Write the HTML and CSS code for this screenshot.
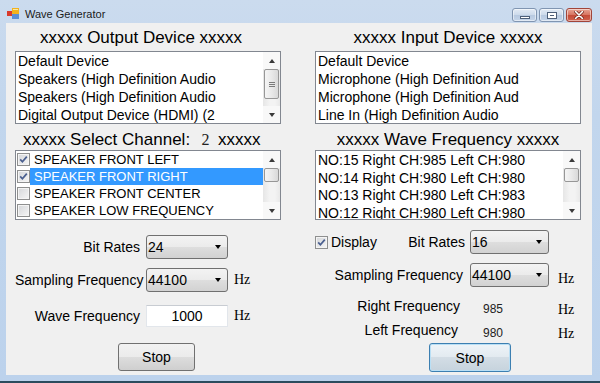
FILE: index.html
```html
<!DOCTYPE html>
<html lang="en">
<head>
  <meta charset="UTF-8">
  <title>Wave Generator</title>
  <link rel="stylesheet" href="styles.css">
</head>
<body>
<div class="ventana">

  <!-- BARRA DE TITULO -->
  <div class="barra-titulo">
    <svg class="icono-app" width="12" height="11" viewBox="0 0 12 11">
      <rect x="0" y="3" width="5" height="5" fill="#d93a2b"/>
      <rect x="5" y="0" width="7" height="6" fill="#f2b21e"/>
      <rect x="5" y="6" width="7" height="5" fill="#5b8fd6"/>
      <rect x="6" y="1" width="5" height="1" fill="#fbe7a6"/>
    </svg>
    <span class="titulo">Wave Generator</span>
    <div class="botones-ventana">
      <span class="btn-ventana minimizar"><i></i></span>
      <span class="btn-ventana maximizar"><i></i></span>
      <span class="btn-ventana cerrar">
        <svg width="10" height="8" viewBox="0 0 10 8">
          <path d="M1.5 0.5 L8.5 7.5 M8.5 0.5 L1.5 7.5" stroke="#6b2219" stroke-width="3" stroke-linecap="round"/>
          <path d="M1.5 0.5 L8.5 7.5 M8.5 0.5 L1.5 7.5" stroke="#fff" stroke-width="1.6" stroke-linecap="round"/>
        </svg>
      </span>
    </div>
  </div>

  <div class="cliente">

    <!-- SALIDA -->
    <div class="columna izquierda">
      <h2 class="encabezado encabezado-salida">xxxxx Output Device xxxxx</h2>
      <div class="lista lista-dispositivos">
        <ul class="items">
          <li>Default Device</li>
          <li>Speakers (High Definition Audio</li>
          <li>Speakers (High Definition Audio</li>
          <li>Digital Output Device (HDMI) (2</li>
        </ul>
        <div class="barra-scroll">
          <span class="flecha arriba"></span>
          <span class="pulgar pulgar-grande"><i></i><i></i><i></i></span>
          <span class="pista"></span>
          <span class="flecha abajo"></span>
        </div>
      </div>

      <div class="encabezado encabezado-canal">
        <span class="canal-texto">xxxxx Select Channel:</span>
        <span class="canal-numero">2</span>
        <span>xxxxx</span>
      </div>
      <div class="lista lista-canales">
        <ul class="items">
          <li>
            <span class="casilla"><svg viewBox="0 0 11 11"><path d="M2.2 5.4 L4.4 7.8 L8.8 2.6"/></svg></span>
            <span class="texto-item">SPEAKER FRONT LEFT</span>
          </li>
          <li class="seleccionado">
            <span class="casilla"><svg viewBox="0 0 11 11"><path d="M2.2 5.4 L4.4 7.8 L8.8 2.6"/></svg></span>
            <span class="texto-item">SPEAKER FRONT RIGHT</span>
          </li>
          <li><span class="casilla"></span><span class="texto-item">SPEAKER FRONT CENTER</span></li>
          <li><span class="casilla"></span><span class="texto-item">SPEAKER LOW FREQUENCY</span></li>
        </ul>
        <div class="barra-scroll">
          <span class="flecha arriba"></span>
          <span class="pulgar pulgar-chico"></span>
          <span class="pista"></span>
          <span class="flecha abajo"></span>
        </div>
      </div>

      <div class="fila fila-bits">
        <span class="etiqueta">Bit Rates</span>
        <div class="combo"><span class="combo-valor">24</span><span class="combo-flecha"></span></div>
      </div>
      <div class="fila fila-muestreo">
        <span class="etiqueta">Sampling Frequency</span>
        <div class="combo"><span class="combo-valor">44100</span><span class="combo-flecha"></span></div>
        <span class="unidad">Hz</span>
      </div>
      <div class="fila fila-onda">
        <span class="etiqueta">Wave Frequency</span>
        <div class="caja-texto">1000</div>
        <span class="unidad">Hz</span>
      </div>
      <button type="button" class="boton boton-salida">Stop</button>
    </div>

    <!-- ENTRADA -->
    <div class="columna derecha">
      <h2 class="encabezado">xxxxx Input Device xxxxx</h2>
      <div class="lista lista-dispositivos">
        <ul class="items">
          <li>Default Device</li>
          <li>Microphone (High Definition Aud</li>
          <li>Microphone (High Definition Aud</li>
          <li>Line In (High Definition Audio</li>
        </ul>
      </div>

      <h2 class="encabezado encabezado-onda">xxxxx Wave Frequency xxxxx</h2>
      <div class="lista lista-ondas">
        <ul class="items">
          <li>NO:15 Right CH:985 Left CH:980</li>
          <li>NO:14 Right CH:980 Left CH:980</li>
          <li>NO:13 Right CH:980 Left CH:983</li>
          <li>NO:12 Right CH:980 Left CH:980</li>
        </ul>
        <div class="barra-scroll">
          <span class="flecha arriba"></span>
          <span class="pulgar pulgar-chico"></span>
          <span class="pista"></span>
          <span class="flecha abajo"></span>
        </div>
      </div>

      <div class="fila fila-bits">
        <span class="etiqueta etiqueta-display">
          <span class="mostrar">
            <span class="casilla"><svg viewBox="0 0 11 11"><path d="M2.2 5.4 L4.4 7.8 L8.8 2.6"/></svg></span>Display
          </span>
          <span>Bit Rates</span>
        </span>
        <div class="combo"><span class="combo-valor">16</span><span class="combo-flecha"></span></div>
      </div>
      <div class="fila fila-muestreo">
        <span class="etiqueta pad-2">Sampling Frequency</span>
        <div class="combo"><span class="combo-valor">44100</span><span class="combo-flecha"></span></div>
        <span class="unidad unidad-baja">Hz</span>
      </div>
      <div class="fila fila-lectura">
        <span class="etiqueta pad-5">Right Frequency</span>
        <span class="valor">985</span>
        <span class="unidad unidad-baja">Hz</span>
      </div>
      <div class="fila fila-lectura fila-izq">
        <span class="etiqueta pad-7">Left Frequency</span>
        <span class="valor">980</span>
        <span class="unidad unidad-baja">Hz</span>
      </div>
      <button type="button" class="boton boton-entrada">Stop</button>
    </div>

  </div>
</div>
</body>
</html>
```

FILE: styles.css
```css
* {
  box-sizing: border-box;
}
body {
  margin: 0;
  font-family: "Liberation Sans", Arial, sans-serif;
  font-size: 14px;
  color: #000;
  background: #bcd2ec;
}
.ventana {
  width: 600px;
  height: 383px;
  display: flex;
  flex-direction: column;
  background: linear-gradient(#cbdbee, #c2d6ed 30%, #bcd2ec);
  border-bottom: 2px solid #2c4b5d;
}

/* barra de titulo */
.barra-titulo {
  height: 23px;
  display: flex;
  align-items: flex-start;
  padding: 8px 8px 0 7px;
}
.icono-app {
  display: block;
}
.titulo {
  margin-left: 6px;
  font-size: 11px;
  line-height: 13px;
  color: #1b1b1b;
}
.botones-ventana {
  margin-left: auto;
  display: flex;
  gap: 2px;
}
.btn-ventana {
  width: 25px;
  height: 14px;
  border: 1px solid #8095b1;
  border-radius: 3px;
  display: flex;
  align-items: center;
  justify-content: center;
  background: linear-gradient(#e3ebf5, #ccdaeb 50%, #b7c9e0 50%, #c5d5e9);
  box-shadow: inset 0 0 0 1px rgba(255,255,255,0.5);
}
.btn-ventana.cerrar {
  width: 26px;
  border-color: #a14539;
  background: linear-gradient(#e8a595, #d77360 50%, #c44a37 50%, #d1624e);
}
.minimizar i {
  width: 10px;
  height: 3px;
  margin-top: 4px;
  background: #fff;
  border: 1px solid #4d5f79;
}
.maximizar i {
  width: 10px;
  height: 7px;
  border: 1px solid #4d5f79;
  background: #fff;
  box-shadow: inset 0 0 0 2px #fff, inset 0 0 0 3px #4d5f79;
}

/* area cliente */
.cliente {
  flex: 1;
  margin: 0 8px 6px 6px;
  padding: 5px 11px 0 9px;
  background: #f0f0f0;
  display: flex;
  gap: 34px;
}
.columna {
  width: 266px;
  display: flex;
  flex-direction: column;
}
.encabezado {
  margin: 0;
  height: 20px;
  font-size: 17px;
  font-weight: normal;
  line-height: 20px;
  text-align: center;
  white-space: nowrap;
}
.encabezado-salida {
  padding-right: 14px;
}
.encabezado-canal,
.encabezado-onda {
  margin-top: 6px;
}
.encabezado-canal {
  display: flex;
  align-items: baseline;
  padding-left: 5px;
}
.canal-texto {
  width: 173px;
}
.canal-numero {
  width: 25px;
  font-family: "Liberation Serif", "Times New Roman", serif;
  font-size: 16px;
  color: #222;
}

/* listas */
.lista {
  background: #fff;
  border: 1px solid #828790;
  display: flex;
  overflow: hidden;
}
.lista-dispositivos {
  height: 73px;
  margin-top: 3px;
}
.lista-canales,
.lista-ondas {
  height: 70px;
}
.items {
  flex: 1;
  list-style: none;
  margin: 0;
  padding: 0 0 0 2px;
  white-space: nowrap;
  overflow: hidden;
}
.lista-dispositivos li {
  line-height: 18px;
}
.lista-ondas .items {
  padding-top: 1px;
}
.lista-ondas li {
  line-height: 17.5px;
}
.lista-canales .items {
  padding: 0;
}
.lista-canales li {
  display: flex;
  align-items: center;
  height: 17px;
  font-size: 13px;
}
.texto-item {
  flex: 1;
  align-self: stretch;
  padding-left: 4px;
  line-height: 17px;
}
.seleccionado .texto-item {
  background: #3399ff;
  color: #fff;
}

/* casillas */
.casilla {
  width: 13px;
  height: 13px;
  flex: none;
  margin-left: 1px;
  border: 1px solid #8e8f8f;
  background: linear-gradient(135deg, #d4d6d9, #f6f6f6);
  box-shadow: inset 0 0 0 1px #f4f4f4;
}
.casilla svg {
  display: block;
  width: 11px;
  height: 11px;
}
.casilla path {
  fill: none;
  stroke: #4a5f8f;
  stroke-width: 1.7;
}

/* barra de desplazamiento */
.barra-scroll {
  width: 17px;
  flex: none;
  display: flex;
  flex-direction: column;
  background: linear-gradient(to right, #e6e6e6, #f3f3f3 40%, #f3f3f3 70%, #e9e9e9);
}
.flecha {
  height: 17px;
  flex: none;
  display: flex;
  align-items: center;
  justify-content: center;
  background: #f8f8f8;
}
.flecha::before {
  content: "";
  border-left: 3.5px solid transparent;
  border-right: 3.5px solid transparent;
}
.flecha.arriba::before {
  border-bottom: 4px solid #3a3a3a;
}
.flecha.abajo::before {
  border-top: 4px solid #3a3a3a;
}
.pulgar {
  flex: none;
  margin: 0 1px;
  border: 1px solid #979797;
  border-radius: 2px;
  background: linear-gradient(to right, #f5f5f5, #e9e9e9 50%, #d9d9d9);
}
.pulgar-grande {
  height: 30px;
  display: flex;
  flex-direction: column;
  align-items: center;
  justify-content: center;
  gap: 1px;
}
.pulgar-grande i {
  width: 6px;
  height: 1px;
  background: #7a7a7a;
}
.pulgar-chico {
  height: 14px;
}
.pista {
  flex: 1;
}

/* filas del formulario */
.fila {
  display: grid;
  align-items: center;
}
.izquierda .fila {
  grid-template-columns: 125px 82px auto;
  column-gap: 6px;
}
.derecha .fila {
  grid-template-columns: 150px 79px auto;
  column-gap: 5px;
}
.izquierda .fila-bits {
  margin-top: 15px;
}
.izquierda .fila-muestreo {
  margin-top: 9px;
}
.fila-onda {
  margin-top: 13px;
}
.derecha .fila-bits {
  margin-top: 10px;
}
.derecha .fila-muestreo {
  margin-top: 9px;
}
.fila-lectura {
  height: 18px;
  margin-top: 7px;
}
.fila-izq {
  margin-top: 6px;
}
.etiqueta {
  text-align: right;
  white-space: nowrap;
}
.etiqueta-display {
  display: flex;
  justify-content: space-between;
  align-items: center;
}
.mostrar {
  display: flex;
  align-items: center;
  gap: 3px;
}
.mostrar .casilla {
  margin-left: 0;
}
.pad-2 {
  padding-right: 2px;
}
.pad-5 {
  padding-right: 5px;
}
.pad-7 {
  padding-right: 7px;
}
.combo {
  height: 24px;
  border: 1px solid #707070;
  border-radius: 3px;
  background: linear-gradient(#f3f3f3, #ebebeb 50%, #dedede 50%, #d2d2d2);
  display: flex;
  align-items: center;
  padding: 0 6px 0 1px;
}
.combo-valor {
  flex: 1;
}
.combo-flecha {
  border-left: 3.5px solid transparent;
  border-right: 3.5px solid transparent;
  border-top: 4px solid #000;
}
.caja-texto {
  height: 22px;
  background: #fff;
  border: 1px solid #e2e6eb;
  border-top-color: #c8ccd2;
  text-align: center;
  line-height: 20px;
}
.unidad {
  font-family: "Liberation Serif", "Times New Roman", serif;
  font-size: 14px;
}
.derecha .unidad {
  margin-left: 4px;
}
.unidad-baja {
  padding-top: 8px;
}
.valor {
  padding: 6px 0 0 13px;
  font-size: 12px;
  color: #222;
}

/* botones */
.boton {
  align-self: flex-start;
  height: 28px;
  padding: 0;
  border: 1px solid #707070;
  border-radius: 3px;
  background: linear-gradient(#f2f2f2, #ebebeb 50%, #dddddd 50%, #cfcfcf);
  font-family: "Liberation Sans", Arial, sans-serif;
  font-size: 14px;
  color: #000;
}
.boton-salida {
  width: 77px;
  margin: 16px 0 0 103px;
}
.boton-entrada {
  width: 82px;
  height: 29px;
  margin: 7px 0 0 114px;
  border-color: #3c7fb1;
  background: linear-gradient(#eef4f8, #e2eaf0 50%, #d3dde5 50%, #c6d3dd);
  box-shadow: inset 0 0 0 1px #b9dff5;
}
```
